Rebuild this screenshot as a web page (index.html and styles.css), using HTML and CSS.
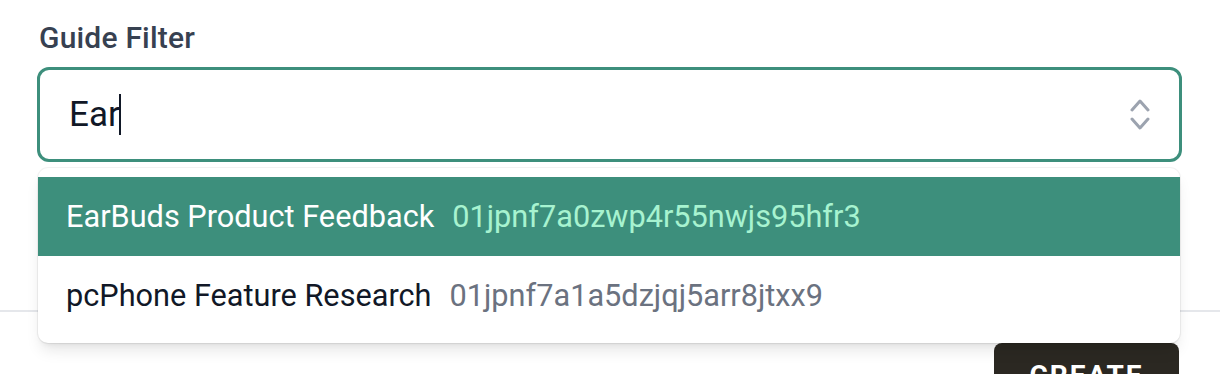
FILE: index.html
```html
<!DOCTYPE html>
<html lang="en">
<head>
<meta charset="utf-8">
<title>Guide Filter</title>
<link rel="stylesheet" href="styles.css">
</head>
<body>
<div class="page">
  <div class="field">
    <label class="label">Guide Filter</label>
    <div class="combo">
      <div class="input"><span class="value">Ear</span><span class="caret"></span></div>
      <svg class="chev" width="20" height="32" viewBox="0 0 20 32" aria-hidden="true">
        <polyline points="2,11 10,2 18,11" fill="none" stroke="#9ca3af" stroke-width="3" stroke-linecap="round" stroke-linejoin="round"/>
        <polyline points="2,20 10,29 18,20" fill="none" stroke="#9ca3af" stroke-width="3" stroke-linecap="round" stroke-linejoin="round"/>
      </svg>
      <ul class="options">
        <li class="option active"><span class="name">EarBuds Product Feedback</span><span class="id">01jpnf7a0zwp4r55nwjs95hfr3</span></li>
        <li class="option"><span class="name">pcPhone Feature Research</span><span class="id">01jpnf7a1a5dzjqj5arr8jtxx9</span></li>
      </ul>
    </div>
  </div>
  <div class="footer">
    <button class="create">CREATE</button>
  </div>
</div>
</body>
</html>
```

FILE: styles.css
```css
html, body {
  margin: 0;
  padding: 0;
  background: #ffffff;
}
body {
  font-family: Roboto, "Liberation Sans", Arial, sans-serif;
  color: #111827;
  overflow: hidden;
}
.page {
  width: 1220px;
}
.field {
  padding: 18px 38px 0 37px;
}
.label {
  display: block;
  font-size: 30px;
  line-height: 40px;
  font-weight: 500;
  letter-spacing: 0.2px;
  color: #374151;
  padding-left: 2px;
  margin-bottom: 9px;
}
.combo {
  position: relative;
}
.input {
  box-sizing: border-box;
  height: 95px;
  border: 3px solid #3d8f7c;
  border-radius: 12px;
  display: flex;
  align-items: center;
  padding-left: 29px;
  font-size: 35px;
  line-height: 42px;
  color: #111827;
}
.caret {
  display: inline-block;
  width: 2px;
  height: 41px;
  background: #111827;
  margin-left: -1px;
}
.chev {
  position: absolute;
  right: 32px;
  top: 32px;
}
.options {
  position: absolute;
  top: 101px;
  left: 1px;
  right: 2px;
  margin: 0;
  padding: 9px 0 8px;
  list-style: none;
  background: #ffffff;
  border-radius: 10px;
  box-shadow: 0 0 0 1px rgba(0,0,0,0.05), 0 10px 15px -3px rgba(0,0,0,0.1), 0 4px 6px -4px rgba(0,0,0,0.1);
  z-index: 2;
}
.option {
  height: 79px;
  display: flex;
  align-items: center;
  padding-left: 28px;
  font-size: 30.7px;
  color: #111827;
  white-space: nowrap;
}
.option .id {
  margin-left: 18px;
  color: #6b7280;
}
.option.active {
  background: #3d8f7c;
  color: #ffffff;
}
.option.active .id {
  color: #a7f3d0;
}
.footer {
  margin-top: 148px;
  border-top: 2px solid #e5e7eb;
  padding: 31px 41px 0 0;
  display: flex;
  justify-content: flex-end;
}
.create {
  width: 185px;
  height: 64px;
  border: none;
  border-radius: 8px;
  background: #2b2822;
  color: #ffffff;
  font-family: Roboto, "Liberation Sans", Arial, sans-serif;
  font-size: 28px;
  font-weight: 700;
  letter-spacing: 2px;
  padding: 0;
}
```
